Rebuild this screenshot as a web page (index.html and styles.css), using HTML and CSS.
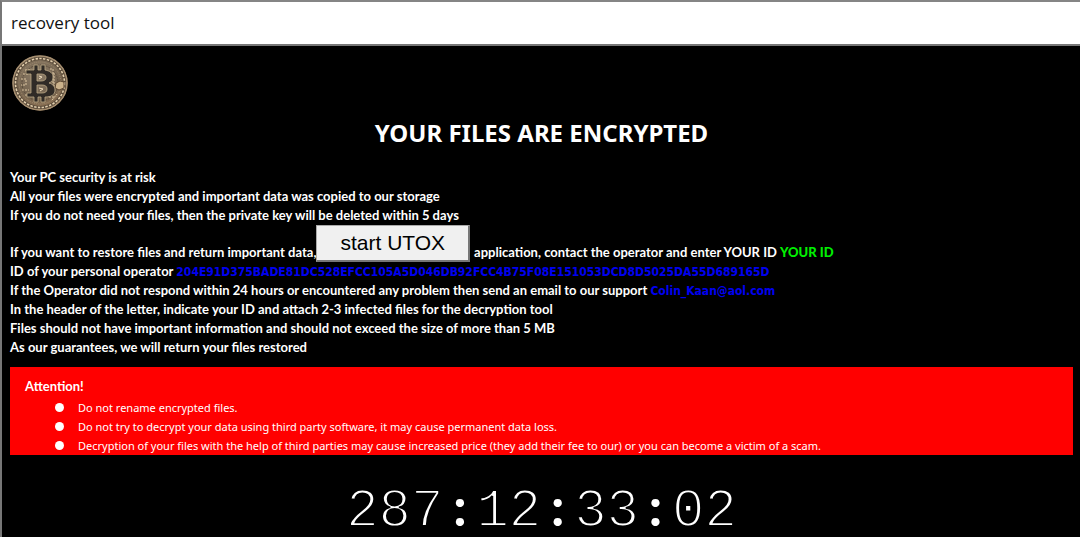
FILE: index.html
```
<!DOCTYPE html>
<html lang="en">
  <head>
    <meta charset="UTF-8" />
    <meta name="viewport" content="width=device-width, initial-scale=1.0" />
    <title>recovery tool</title>
    <link rel="stylesheet" href="styles.css">
  </head>
  <body>
    <header class="titlebar">recovery tool</header>
    <main class="content">
      <!-- coin -->
      <svg class="coin" viewBox="0 0 56 56" aria-hidden="true">
        <defs>
          <radialGradient id="metal" cx="45%" cy="35%" r="70%">
            <stop offset="0" stop-color="#8c7d69" />
            <stop offset="0.6" stop-color="#75644f" />
            <stop offset="1" stop-color="#987653" />
          </radialGradient>
        </defs>
        <circle cx="28" cy="28" r="27.5" fill="url(#metal)" />
        <circle cx="28" cy="28" r="27" fill="none" stroke="#a58e70" stroke-width="1.5" />
        <circle cx="28" cy="28" r="24.5" fill="none" stroke="#5a4b3a" stroke-width="3" />
        <circle cx="28" cy="28" r="24.5" fill="none" stroke="#e3cfad" stroke-width="1.6" stroke-dasharray="2.4 1.4" />
        <circle cx="28" cy="28" r="21" fill="none" stroke="#a08c70" stroke-width="1" stroke-dasharray="1 1" />
        <circle cx="28" cy="28" r="18" fill="none" stroke="#594b3b" stroke-width="1" stroke-dasharray="2 1" />
        <path d="M13 15h6M11 19h5M9 24h5v6h-5M10 35h7M13 40h6M38 14h3v22M42 18v15M37 42h6M40 45l5-6" fill="none" stroke="#dcc6a2" stroke-width="1" stroke-dasharray="2 1" />
        <path d="M44 28l4-2 4 1v6l-5 2-4-2z" fill="#cbb28b" stroke="#5a4530" />
        <path d="M14 15h8v-5h4v5h3v-5h4v5c5 1 8 3 8 7 0 3-1 5-4 6 4 1 6 4 6 7 0 5-4 7-10 7v5h-4v-5h-3v5h-4v-5h-7v-4h4V19h-5zM25 19v7h4c3 0 5-1 5-3.500s-2-3.500-5-3.500zM25 30v8h5c3 0 5-1 5-4s-2-4-5-4z" fill="#302b26" fill-rule="evenodd" stroke="#bda987" stroke-width="0.8" />
        <path d="M27 21l3 1-3 2M27 33l4 1-3 2" fill="none" stroke="#eedcbc" />
      </svg>

      <h1 class="heading">YOUR FILES ARE ENCRYPTED</h1>

      <div class="message">
        <p>Your PC security is at risk</p>
        <p>All your files were encrypted and important data was copied to our storage</p>
        <p>If you do not need your files, then the private key will be deleted within 5 days</p>
        <p class="start-row">
          <span>If you want to restore files and return important data,</span>
          <button type="button" class="start">start UTOX</button>
          <span class="after">application, contact the operator and enter YOUR ID <b class="your-id">YOUR ID</b></span>
        </p>
        <p>ID of your personal operator <span class="operator">204E91D375BADE81DC528EFCC105A5D046DB92FCC4B75F08E151053DCD8D5025DA55D689165D</span></p>
        <p>If the Operator did not respond within 24 hours or encountered any problem then send an email to our support <span class="operator">Colin_Kaan@aol.com</span></p>
        <p>In the header of the letter, indicate your ID and attach 2-3 infected files for the decryption tool</p>
        <p>Files should not have important information and should not exceed the size of more than 5 MB</p>
        <p>As our guarantees, we will return your files restored</p>
      </div>

      <section class="attention">
        <h2>Attention!</h2>
        <ul>
          <li>Do not rename encrypted files.</li>
          <li>Do not try to decrypt your data using third party software, it may cause permanent data loss.</li>
          <li>Decryption of your files with the help of third parties may cause increased price (they add their fee to our) or you can become a victim of a scam.</li>
        </ul>
      </section>

      <div class="timer">287<span class="colon">:</span>12<span class="colon">:</span>33<span class="colon">:</span>02</div>
    </main>
  </body>
</html>
```
FILE: styles.css
```
* {
  box-sizing: border-box;
}
body {
  margin: 0;
  min-height: 100vh;
  background: #000;
  color: #fff;
  border-top: 2px solid #858585;
  border-left: 2px solid #777;
  font-family: Lato, "Noto Sans", sans-serif;
  font-size: 13px;
  line-height: 19px;
}
.titlebar {
  padding: 0 9px;
  background: #fff;
  color: #111;
  border-bottom: 2px solid #777;
  font-family: "Open Sans", sans-serif;
  font-size: 17px;
  line-height: 42px;
}
.content {
  padding: 9px 7px 0 8px;
}
.coin {
  display: block;
  width: 56px;
  height: 56px;
  margin-left: 2px;
}
.heading {
  margin: 8px 0 21px;
  font-family: "Noto Sans", "Open Sans", sans-serif;
  font-size: 24px;
  line-height: 28px;
  text-align: center;
}
.message {
  font-weight: bold;
}
.message p {
  margin: 0;
  white-space: nowrap;
}
.message .start-row {
  display: flex;
  align-items: flex-end;
}
.start {
  height: 37px;
  padding: 0 23px;
  background: #f0f0f0;
  color: #000;
  border: 1px solid #aaa;
  border-right: 2px solid #777;
  border-bottom: 2px solid #777;
  font-family: "Liberation Sans", Arial, sans-serif;
  font-size: 21px;
}
.after {
  padding-left: 4px;
}
.your-id {
  color: #00f000;
}
.operator {
  color: #0000f0;
  font-family: "DejaVu Sans Condensed", "DejaVu Sans", sans-serif;
  font-size: 12px;
  line-height: 1;
}
.attention {
  margin-top: 10px;
  padding: 10px 0 0 15px;
  background: #f00;
}
.attention h2 {
  margin: 0 0 2px;
  font-size: 13px;
}
.attention ul {
  margin: 0;
  padding-left: 30px;
  list-style: none;
  font-family: "Noto Sans", sans-serif;
  font-size: 11px;
}
.attention li {
  display: flex;
  align-items: center;
  gap: 14px;
}
.attention li::before {
  content: "";
  width: 9px;
  height: 9px;
  border-radius: 50%;
  background: #fff;
}
.timer {
  margin-top: 25px;
  font-family: "Liberation Mono", "Courier New", monospace;
  font-size: 54px;
  line-height: 52px;
  text-align: center;
  -webkit-text-stroke: 2px #000;
}
.colon {
  display: inline-block;
  width: 33px;
  font-family: Lato, sans-serif;
  font-weight: bold;
  -webkit-text-stroke: 0;
}
```
